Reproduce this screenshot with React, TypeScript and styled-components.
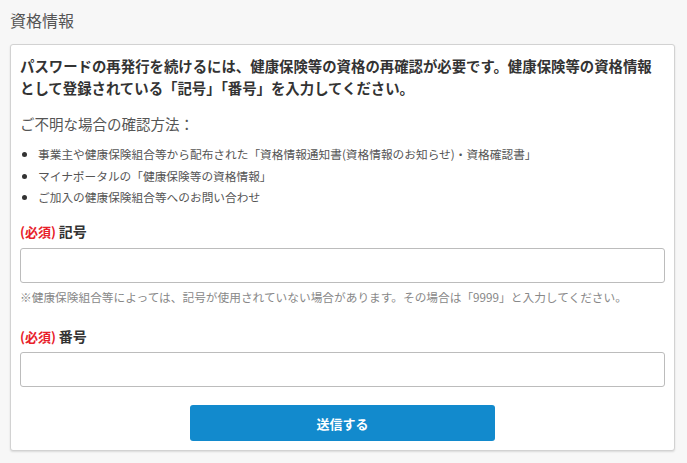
import React from "react";
import styled, { createGlobalStyle } from "styled-components";

const GlobalStyle = createGlobalStyle`
  html, body {
    margin: 0;
    padding: 0;
    background: #f7f7f7;
    font-family: "Noto Sans CJK JP", "Noto Sans", sans-serif;
    color: #333;
  }
  * {
    box-sizing: border-box;
  }
`;

const Page = styled.div`
  padding: 8px 12px 12px 10px;
`;

const PageTitle = styled.h1`
  margin: 0 0 12px;
  font-size: 16px;
  line-height: 24px;
  font-weight: 400;
  color: #555;
`;

const Card = styled.form`
  background: #fff;
  border: 1px solid #d2d2d2;
  border-radius: 3px;
  box-shadow: 0 1px 2px rgba(0, 0, 0, 0.12);
  padding: 10px 9px 9px;
`;

const Lead = styled.p`
  margin: 0;
  font-size: 14.4px;
  line-height: 22px;
  font-weight: 700;
  color: #333;
`;

const SubHeading = styled.p`
  margin: 14px 0 8px;
  font-size: 14.5px;
  line-height: 22px;
  color: #555;
`;

const MethodList = styled.ul`
  margin: 0;
  padding-left: 18px;
  list-style: disc;
`;

const MethodItem = styled.li`
  font-size: 11.7px;
  line-height: 21.5px;
  color: #555;

  &::marker {
    color: #333;
  }
`;

const Field = styled.div<{ $gap: number }>`
  margin-top: ${({ $gap }) => $gap}px;
`;

const Label = styled.label`
  display: block;
  margin-bottom: 4.5px;
  font-size: 14px;
  line-height: 22px;
  font-weight: 700;
  color: #333;
`;

const Required = styled.span`
  color: #e8202a;
  font-size: 13px;
  margin-right: 3px;
`;

const TextInput = styled.input`
  display: block;
  width: 100%;
  height: 35px;
  padding: 0 8px;
  border: 1px solid #bcbcbc;
  border-radius: 3px;
  background: #fff;
  font-family: inherit;
  font-size: 14px;
  outline: none;
`;

const Note = styled.p`
  margin: 5px 0 0;
  font-size: 11.7px;
  line-height: 18px;
  color: #888;
`;

const Actions = styled.div`
  display: flex;
  justify-content: center;
  margin-top: 18px;
`;

const SubmitButton = styled.button`
  width: 305px;
  height: 36px;
  border: none;
  border-radius: 3px;
  background: #128acd;
  color: #fff;
  font-family: inherit;
  font-size: 13px;
  font-weight: 700;
  cursor: pointer;
`;

const methods = [
  "事業主や健康保険組合等から配布された「資格情報通知書(資格情報のお知らせ)・資格確認書」",
  "マイナポータルの「健康保険等の資格情報」",
  "ご加入の健康保険組合等へのお問い合わせ",
];

export default function App() {
  return (
    <>
      <GlobalStyle />
      <Page>
        <PageTitle>資格情報</PageTitle>
        <Card onSubmit={(e) => e.preventDefault()}>
          <Lead>
            パスワードの再発行を続けるには、健康保険等の資格の再確認が必要です。健康保険等の資格情報として登録されている「記号」「番号」を入力してください。
          </Lead>

          <SubHeading>ご不明な場合の確認方法：</SubHeading>
          <MethodList>
            {methods.map((m) => (
              <MethodItem key={m}>{m}</MethodItem>
            ))}
          </MethodList>

          <Field $gap={12.5}>
            <Label htmlFor="kigo">
              <Required>(必須)</Required>記号
            </Label>
            <TextInput id="kigo" type="text" />
            <Note>
              ※健康保険組合等によっては、記号が使用されていない場合があります。その場合は「9999」と入力してください。
            </Note>
          </Field>

          <Field $gap={19}>
            <Label htmlFor="bango">
              <Required>(必須)</Required>番号
            </Label>
            <TextInput id="bango" type="text" />
          </Field>

          <Actions>
            <SubmitButton type="submit">送信する</SubmitButton>
          </Actions>
        </Card>
      </Page>
    </>
  );
}
